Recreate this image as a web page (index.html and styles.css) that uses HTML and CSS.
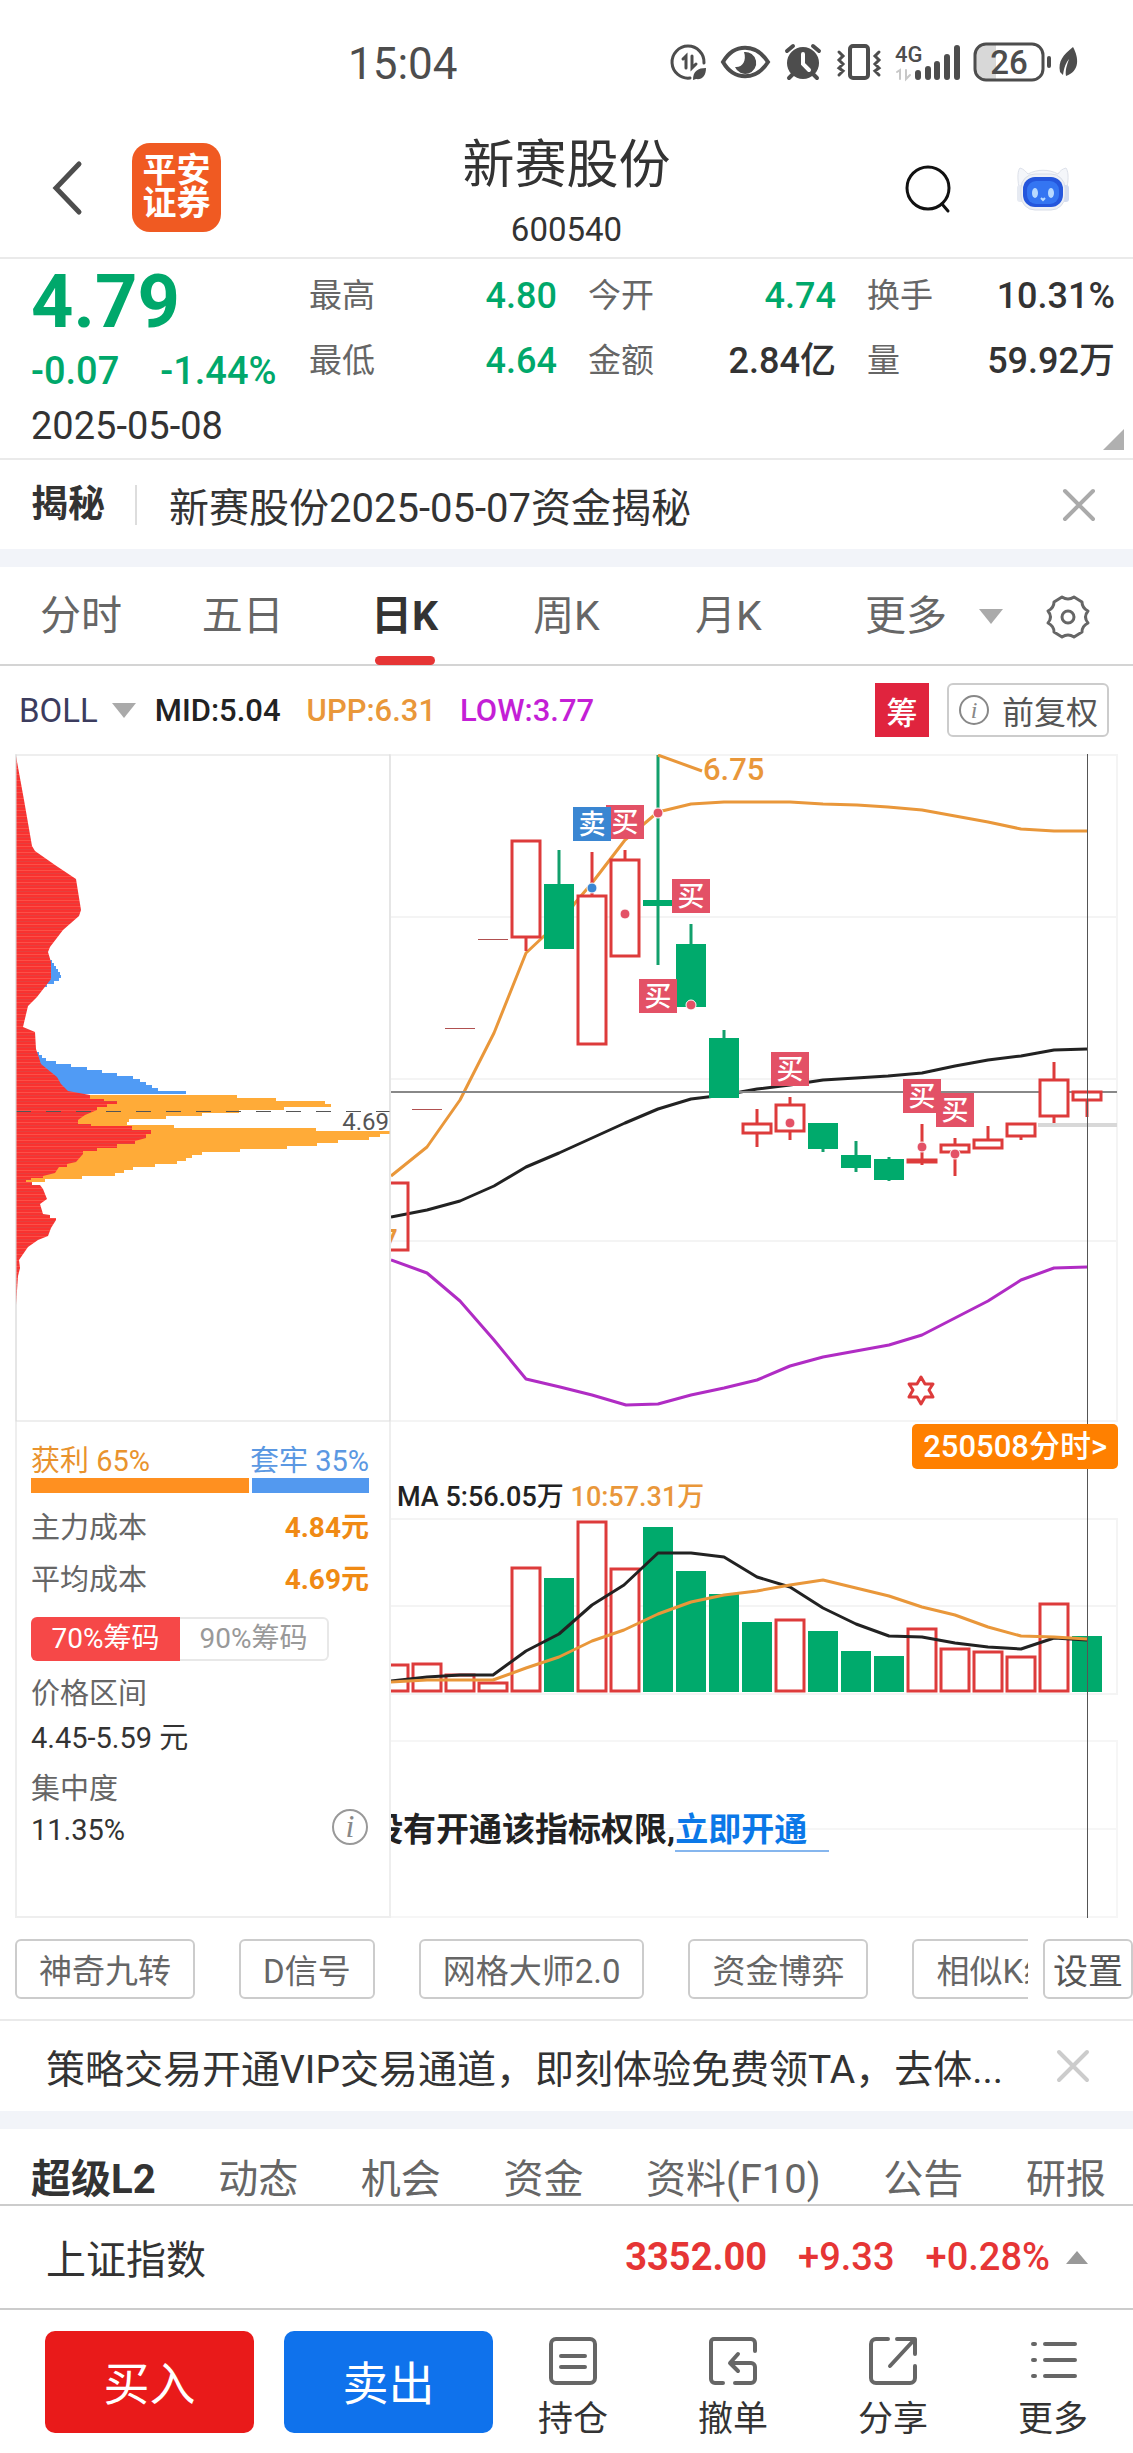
FILE: index.html
```html
<!doctype html>
<html lang="zh-CN">
	<head>
		<meta charset="utf-8">
		<meta name="viewport" content="width=device-width">
		<title>新赛股份 600540</title>
		<link rel="stylesheet" href="styles.css">
	</head>
	<body>
		<div class="status">
			<span class="clock">15:04</span>
			<svg class="status-icons" width="416" height="46" viewBox="0 0 416 46" fill="none" stroke="#4d4d4d" stroke-linecap="round">
				<!-- data saver -->
				<path d="M20 38A16 16 0 1 1 34 23" stroke-width="3"/>
				<path d="M13 19l3-3v12M22 16v12l4-4" stroke-width="3"/>
				<path d="M23 40c0-9 5-12 13-12 0 8-4 12-10 11z" fill="#4d4d4d" stroke="none"/>
				<!-- eye -->
				<path d="M53 22C64 3 86 3 98 22 86 41 64 41 53 22z" stroke-width="4"/>
				<path d="M74 12a11 11 0 1 1-9 15c7 1 12-6 9-15z" fill="#4d4d4d" stroke="none"/>
				<!-- alarm -->
				<circle cx="133" cy="23" r="16" fill="#4d4d4d" stroke="none"/>
				<path d="M117 11l6-5M149 11l-6-5M123 34l-4 4M143 34l4 4" stroke-width="4"/>
				<path d="M133 14v10l6 6" stroke="#fff" stroke-width="4"/>
				<!-- vibrate -->
				<rect x="180" y="6" width="18" height="32" rx="3" stroke-width="4"/>
				<path d="M169 12l4 4-4 4 4 4-4 4 4 3-4 4M209 12l-4 4 4 4-4 4 4 4-4 3 4 4" stroke-width="3"/>
				<!-- signal -->
				<text x="225" y="22" class="net">4G</text>
				<path d="M227 32l3-2v9M236 30v9l4-4" stroke="#c8c8c8" stroke-width="2"/>
				<path d="M248 33v4M258 29v8M267 24v13M277 17v20M287 8v29" stroke-width="6"/>
				<!-- battery -->
				<path d="M318 5h-6a8 8 0 0 0-8 8v18a8 8 0 0 0 8 8h14V5z" fill="#d8d8d8" stroke="none"/>
				<rect x="305" y="4" width="68" height="36" rx="11" stroke-width="3"/>
				<text x="339" y="34" class="charge">26</text>
				<path d="M379 18v8" stroke-width="4"/>
				<path d="M403 7c-10 8-15 14-13 25l3 3c1-8 3-12 6-16-2 6-4 11-3 17 14-5 13-18 7-29z" fill="#4d4d4d" stroke="none"/>
			</svg>
		</div>

		<header class="topbar">
			<div class="topbar-left">
				<button class="icon-btn" aria-label="返回">
					<svg width="34" height="58" viewBox="0 0 34 58" fill="none" stroke="#4d4d4d" stroke-width="5" stroke-linecap="round"><path d="M29 5L6 29l23 24"/></svg>
				</button>
				<a class="logo" href="#">平安<br>证券</a>
			</div>
			<div class="topbar-title">
				<h1>新赛股份</h1>
				<p>600540</p>
			</div>
			<div class="topbar-right">
				<button class="icon-btn" aria-label="搜索">
					<svg width="50" height="54" viewBox="0 0 50 54" fill="none" stroke="#111" stroke-width="3" stroke-linecap="round"><circle cx="25" cy="27" r="21"/><path d="M39 43l6 7"/></svg>
				</button>
				<button class="icon-btn" aria-label="助手">
					<svg width="56" height="46" viewBox="0 0 56 46">
						<path d="M4 22C2 12 3 5 5 3c4 1 6 4 8 6 9-5 21-5 30 0 2-3 4-5 8-6 2 3 3 9 1 19z" fill="#f4f6fa" stroke="#dde1ea"/>
						<rect x="2" y="20" width="7" height="17" rx="3" fill="#e6eaf2"/>
						<rect x="47" y="20" width="7" height="17" rx="3" fill="#d3dcf0"/>
						<rect x="6" y="9" width="44" height="36" rx="14" fill="#edf0f6" stroke="#d9dee8"/>
						<rect x="8" y="12" width="40" height="30" rx="12" fill="#2456dc"/>
						<rect x="12" y="16" width="32" height="23" rx="9" fill="#3475f2"/>
						<ellipse cx="20" cy="28" rx="3" ry="5" fill="#b8daff"/>
						<ellipse cx="36" cy="28" rx="3" ry="5" fill="#b8daff"/>
						<path d="M26 33l2 2 2-2" stroke="#b8daff" stroke-width="2" fill="none"/>
					</svg>
				</button>
			</div>
		</header>

		<section class="quote">
			<div class="price-box">
				<div class="price">4.79</div>
				<div class="change"><span>-0.07</span><span>-1.44%</span></div>
				<div class="date">2025-05-08</div>
			</div>
			<dl class="facts">
				<div><dt>最高</dt><dd class="down">4.80</dd></div>
				<div><dt>今开</dt><dd class="down">4.74</dd></div>
				<div><dt>换手</dt><dd>10.31%</dd></div>
				<div><dt>最低</dt><dd class="down">4.64</dd></div>
				<div><dt>金额</dt><dd>2.84亿</dd></div>
				<div><dt>量</dt><dd>59.92万</dd></div>
			</dl>
			<span class="corner"></span>
		</section>

		<section class="reveal">
			<b>揭秘</b>
			<a href="#">新赛股份2025-05-07资金揭秘</a>
			<button class="icon-btn" aria-label="关闭">
				<svg width="34" height="34" viewBox="0 0 34 34" stroke="#aaa" stroke-width="4" stroke-linecap="round"><path d="M3 3l28 28M31 3L3 31"/></svg>
			</button>
		</section>

		<nav class="periods">
			<a href="#">分时</a>
			<a href="#">五日</a>
			<a href="#" class="on">日K</a>
			<a href="#">周K</a>
			<a href="#">月K</a>
			<div class="periods-more">
				<a href="#">更多</a>
				<span class="tri"></span>
				<button class="icon-btn" aria-label="设置">
					<svg width="46" height="46" viewBox="0 0 46 46" fill="none" stroke="#666" stroke-width="3" stroke-linejoin="round">
						<path d="M17 3q6 4 12 0l8 5q0 6 6 9v0q-5 6 0 12v0q-6 3-6 9l-8 5q-6-4-12 0l-8-5q0-6-6-9v0q5-6 0-12v0q6-3 6-9z"/>
						<circle cx="23" cy="23" r="6"/>
					</svg>
				</button>
			</div>
		</nav>

		<div class="indicator">
			<button class="ind-name">BOLL</button>
			<span class="tri"></span>
			<span class="mid">MID:5.04</span>
			<span class="upp">UPP:6.31</span>
			<span class="low">LOW:3.77</span>
			<button class="chip-btn">筹</button>
			<button class="adjust">
				<svg width="32" height="32" viewBox="0 0 32 32"><circle cx="16" cy="16" r="14" fill="none" stroke="#888" stroke-width="2"/><text x="16" y="24" class="info-i">i</text></svg>
				前复权
			</button>
		</div>

		<main class="charts">
			<aside class="chips">
				<svg class="chip-plot" viewBox="15 754 376 668">
					<defs>
						<pattern id="rows" width="8" height="6" patternUnits="userSpaceOnUse">
							<rect width="8" height="6" fill="#f93230"/>
							<rect width="8" height="1" fill="#fb5048"/>
							<rect y="3" width="8" height="1" fill="#e4413f"/>
						</pattern>
					</defs>
					<path fill="#509bf5" d="M16 960H52v3H54v3H56v3H58v3H60v3H61v3H59v3H54v3H47v3H42v3H16z"/>
					<path fill="#509bf5" d="M16 1052H39v3H42v3H46v3H56v3H71v3H87v3H102v3H117v3H133v3H140v3H146v3H152v3H158v3H186v3H16z"/>
					<path fill="#ffab38" d="M16 1095H237v3H276v3H325v3H331v3H284v3H239v3H202v3H166v3H129v3H127v3H174v3H316v3H390v3H380v3H369v3H338v3H317v3H287v3H240v3H202v3H192v3H186v3H177v3H155v3H133v3H124v3H115v3H82v3H45v3H16z"/>
					<path fill="url(#rows)" d="M16 756L24 800 32 846 35 851 55 865 76 879 81 910 79 916 63 930 50 947 48 952 51 962 51 979 37 997 28 1006 23 1027 35 1032 36 1049 41 1064 57 1077 61 1084 68 1091 90 1095V1099H104V1101H117V1104H107V1107H97V1110L85 1115 78 1120V1124H91V1126H132V1130H151V1134H146V1138L135 1141V1144H117V1148H97V1151H83V1154L76 1162 67 1164V1167H59L55 1173 43 1176V1178H31V1180H26V1182H32V1185H40L43 1189 47 1199 40 1204 43 1214 50 1215V1218H56V1220L51 1228 48 1236 38 1240 28 1247 19 1260 20 1268 18 1276 16 1305z"/>
					<path stroke="#555" stroke-width="1" stroke-dasharray="15 15" shape-rendering="crispEdges" d="M16 1111H390"/>
					<text x="389" y="1130" class="avg">4.69</text>
					<rect x="16" y="755" width="374" height="666" fill="none" stroke="#ddd"/>
				</svg>
				<div class="chip-info">
					<div class="line ratio"><span class="gain">获利 65%</span><span class="loss">套牢 35%</span></div>
					<div class="bar"><i class="bar-gain" style="flex-grow: 65"></i><i class="bar-loss" style="flex-grow: 35"></i></div>
					<div class="line cost"><span>主力成本</span><b>4.84元</b></div>
					<div class="line cost"><span>平均成本</span><b>4.69元</b></div>
					<div class="seg"><button class="on">70%筹码</button><button>90%筹码</button></div>
					<div class="line">价格区间</div>
					<div class="line val">4.45-5.59 元</div>
					<div class="line gap">集中度</div>
					<div class="line val">
						<span>11.35%</span>
						<button class="icon-btn" aria-label="说明">
							<svg width="38" height="38" viewBox="0 0 38 38"><circle cx="19" cy="19" r="17" fill="none" stroke="#999" stroke-width="2"/><text x="19" y="29" class="info-big">i</text></svg>
						</button>
					</div>
				</div>
			</aside>

			<div class="panes">
				<svg class="kline" viewBox="391 754 742 668">
					<path class="grid" d="M391 755H1117V1421H391M391 917H1117M391 1079H1117M391 1241H1117"/>
					<path stroke="#d8d8d8" stroke-width="4" d="M1038 1125H1117"/>
					<path class="ln" stroke="#222" d="M391 1217L427 1210 460 1201 494 1186 526 1167 559 1153 592 1138 625 1123 658 1109 691 1099 724 1095 757 1089 790 1085 823 1080 856 1078 888 1076 922 1073 955 1066 988 1060 1021 1056 1054 1050 1087 1049"/>
					<path class="ln" stroke="#e9973a" d="M391 1176L427 1147 460 1100 494 1033 526 953 543 937 559 925 575 903 592 883 625 840 658 812 691 804 724 802 790 802 823 804 857 805 888 807 922 810 955 816 988 822 1021 829 1054 831 1087 831"/>
					<path class="ln" stroke="#b02cc4" d="M391 1260L427 1273 460 1301 494 1340 526 1379 560 1387 592 1395 626 1405 658 1404 691 1395 724 1388 757 1380 790 1366 823 1357 856 1351 889 1345 922 1335 955 1318 988 1301 1021 1280 1054 1268 1087 1267"/>
					<text x="398" y="1251" text-anchor="end" class="peak">3.97</text>
					<path stroke="#888" stroke-width="2" d="M391 1092H1117"/>

					<path class="dash" d="M478 939H508M445 1028H475M412 1109H442"/>
					<path class="wick-up" d="M526 938V951M592 852V895M625 850V859M757 1109V1147M790 1097V1140M922 1124V1165M955 1138V1176M988 1126V1139M1021 1137V1140M1054 1062V1123M1087 1101V1117"/>
					<path class="wick-down" d="M559 850V884M658 755V965M691 924V944M724 1030V1038M823 1149V1152M856 1141V1172M889 1157V1181"/>
					<g class="body-up">
						<rect x="380" y="1183" width="28" height="67" fill="none"/>
						<rect x="512" y="841" width="28" height="96"/>
						<rect x="578" y="896" width="28" height="148"/>
						<rect x="611" y="860" width="28" height="96"/>
						<rect x="743" y="1124" width="28" height="9"/>
						<rect x="776" y="1105" width="28" height="26"/>
						<rect x="908" y="1160" width="28" height="2"/>
						<rect x="941" y="1145" width="28" height="7"/>
						<rect x="974" y="1140" width="28" height="8"/>
						<rect x="1007" y="1124" width="28" height="12"/>
						<rect x="1040" y="1080" width="28" height="36"/>
						<rect x="1073" y="1092" width="28" height="8"/>
					</g>
					<g class="body-down">
						<rect x="544" y="884" width="30" height="65"/>
						<rect x="643" y="900" width="30" height="6"/>
						<rect x="676" y="944" width="30" height="63"/>
						<rect x="709" y="1038" width="30" height="60"/>
						<rect x="808" y="1123" width="30" height="26"/>
						<rect x="841" y="1155" width="30" height="13"/>
						<rect x="874" y="1159" width="30" height="21"/>
					</g>

					<g class="mark-buy">
						<circle cx="625" cy="914" r="5"/>
						<circle cx="658" cy="813" r="5"/>
						<circle cx="691" cy="1005" r="5"/>
						<circle cx="790" cy="1123" r="5"/>
						<circle cx="922" cy="1147" r="5"/>
						<circle cx="955" cy="1154" r="5"/>
						<rect x="606" y="805" width="38" height="34"/><text x="625" y="832">买</text>
						<rect x="672" y="879" width="38" height="34"/><text x="691" y="906">买</text>
						<rect x="639" y="979" width="38" height="34"/><text x="658" y="1006">买</text>
						<rect x="771" y="1052" width="38" height="34"/><text x="790" y="1079">买</text>
						<rect x="903" y="1079" width="38" height="34"/><text x="922" y="1106">买</text>
						<rect x="936" y="1093" width="38" height="34"/><text x="955" y="1120">买</text>
					</g>
					<g class="mark-sell">
						<circle cx="592" cy="888" r="5"/>
						<rect x="573" y="807" width="38" height="34"/><text x="592" y="834">卖</text>
					</g>

					<path class="ln" stroke="#e9973a" d="M658 755L702 771"/>
					<text x="703" y="780" class="peak">6.75</text>
					<path fill="none" stroke="#dd3b3b" stroke-width="3" stroke-linejoin="round" d="M921 1377l4 7h8l-4 6 4 7h-8l-4 7-4-7h-8l4-7-4-6h8z"/>
				</svg>

				<div class="between">
					<a class="intraday" href="#">250508分时&gt;</a>
					<p class="ma"><span>MA 5:56.05万</span> <span class="ma10">10:57.31万</span></p>
				</div>

				<svg class="volume" viewBox="391 1518 742 177">
					<path class="grid" d="M391 1519H1117V1694H391M391 1606H1117"/>
					<g class="body-up">
						<rect x="380" y="1665" width="28" height="26"/>
						<rect x="413" y="1664" width="28" height="27"/>
						<rect x="446" y="1675" width="28" height="16"/>
						<rect x="479" y="1683" width="28" height="8"/>
						<rect x="512" y="1568" width="28" height="123"/>
						<rect x="578" y="1522" width="28" height="169"/>
						<rect x="611" y="1569" width="28" height="122"/>
						<rect x="776" y="1620" width="28" height="71"/>
						<rect x="908" y="1629" width="28" height="62"/>
						<rect x="941" y="1649" width="28" height="42"/>
						<rect x="974" y="1652" width="28" height="39"/>
						<rect x="1007" y="1657" width="28" height="34"/>
						<rect x="1040" y="1604" width="28" height="87"/>
					</g>
					<g class="body-down">
						<rect x="544" y="1578" width="30" height="114"/>
						<rect x="643" y="1527" width="30" height="165"/>
						<rect x="676" y="1571" width="30" height="121"/>
						<rect x="709" y="1594" width="30" height="98"/>
						<rect x="742" y="1622" width="30" height="70"/>
						<rect x="808" y="1631" width="30" height="61"/>
						<rect x="841" y="1651" width="30" height="41"/>
						<rect x="874" y="1656" width="30" height="36"/>
						<rect x="1072" y="1636" width="30" height="56"/>
					</g>
					<path class="ln" stroke="#222" d="M391 1681L427 1677 460 1675 493 1675 526 1651 559 1634 592 1605 624 1585 658 1553 691 1553 724 1557 757 1577 790 1587 823 1608 856 1624 889 1636 922 1637 955 1643 988 1647 1021 1649 1054 1638 1087 1640"/>
					<path class="ln" stroke="#e9973a" d="M391 1682L427 1680 493 1680 526 1668 559 1657 592 1641 624 1630 658 1614 691 1602 724 1595 757 1591 790 1585 823 1580 856 1588 889 1596 922 1607 955 1615 988 1627 1021 1636 1054 1637 1087 1639"/>
				</svg>

				<div class="locked">
					<p>没有开通该指标权限,<a href="#">立即开通</a></p>
				</div>
				<span class="cursor"></span>
			</div>
		</main>

		<div class="tools">
			<div class="tool-list">
				<button>神奇九转</button>
				<button>D信号</button>
				<button>网格大师2.0</button>
				<button>资金博弈</button>
				<button>相似K线</button>
			</div>
			<button class="tool-set">设置</button>
		</div>

		<section class="notice">
			<a href="#">策略交易开通VIP交易通道，即刻体验免费领TA，去体...</a>
			<button class="icon-btn" aria-label="关闭">
				<svg width="34" height="34" viewBox="0 0 34 34" stroke="#ccc" stroke-width="4" stroke-linecap="round"><path d="M3 3l28 28M31 3L3 31"/></svg>
			</button>
		</section>

		<nav class="sections">
			<a href="#" class="on">超级L2</a>
			<a href="#">动态</a>
			<a href="#">机会</a>
			<a href="#">资金</a>
			<a href="#">资料(F10)</a>
			<a href="#">公告</a>
			<a href="#">研报</a>
		</nav>

		<div class="index-row">
			<span class="index-name">上证指数</span>
			<b>3352.00</b>
			<span>+9.33</span>
			<span>+0.28%</span>
			<i class="tri-up"></i>
		</div>

		<footer class="actions">
			<button class="buy">买入</button>
			<button class="sell">卖出</button>
			<a href="#">
				<svg viewBox="0 0 48 48"><rect x="2" y="2" width="44" height="44" rx="5"/><path d="M12 19h24M12 30h24"/></svg>
				持仓
			</a>
			<a href="#">
				<svg viewBox="0 0 48 48"><path d="M46 14V6a4 4 0 0 0-4-4H5a3 3 0 0 0-3 3v37a4 4 0 0 0 4 4h8M26 46h16a4 4 0 0 0 4-4V30a4 4 0 0 0-4-4H22M29 17l-8 9 8 8"/></svg>
				撤单
			</a>
			<a href="#">
				<svg viewBox="0 0 48 48"><path d="M19 2H7a5 5 0 0 0-5 5v34a5 5 0 0 0 5 5h34a5 5 0 0 0 5-5V29M28 2h18v15M45 3L21 29"/></svg>
				分享
			</a>
			<a href="#">
				<svg viewBox="0 0 48 48"><path d="M16 7h30M16 23h30M16 39h30M4 7h2M4 23h2M4 39h2"/></svg>
				更多
			</a>
		</footer>
	</body>
</html>
```
FILE: styles.css
```css
* {
	box-sizing: border-box;
}

body {
	margin: 0;
	background: #fff;
	color: #333;
	font-family: Roboto, "Noto Sans CJK SC", sans-serif;
	font-size: 33px;
}

h1, p, dl, dd {
	margin: 0;
	font-weight: normal;
}

a {
	color: inherit;
	text-decoration: none;
}

button {
	margin: 0;
	padding: 0;
	border: 0;
	background: none;
	color: inherit;
	font: inherit;
}

svg {
	display: block;
}

.icon-btn {
	display: block;
	flex: none;
}

.tri {
	border: 12px solid transparent;
	border-top: 15px solid #aaa;
	border-bottom: 0;
}

.down {
	color: #00a86b;
}

/* status bar */

.status {
	display: flex;
	justify-content: space-between;
	padding: 40px 47px 0 348px;
	height: 128px;
	color: #4d4d4d;
}

.clock {
	font-size: 44px;
	line-height: 48px;
}

.net {
	fill: #4d4d4d;
	stroke: none;
	font-size: 22px;
	font-weight: 500;
}

.charge {
	fill: #4d4d4d;
	stroke: none;
	font-size: 33px;
	font-weight: 500;
	text-anchor: middle;
}

/* title bar */

.topbar {
	display: grid;
	grid-template-columns: 1fr auto 1fr;
	height: 131px;
	border-bottom: 2px solid #eaeaea;
}

.topbar-left, .topbar-right {
	display: flex;
	align-items: center;
	height: 119px;
}

.topbar-left {
	padding-left: 50px;
	gap: 48px;
}

.topbar-right {
	justify-content: flex-end;
	padding-right: 62px;
	gap: 62px;
}

.logo {
	width: 89px;
	height: 89px;
	padding: 11px 0;
	border-radius: 18px;
	background: #f05a22;
	color: #fff;
	font-size: 34px;
	font-weight: 700;
	line-height: 33px;
	text-align: center;
}

.topbar-title {
	text-align: center;
}

.topbar-title h1 {
	padding-top: 6px;
	font-size: 52px;
	line-height: 64px;
}

.topbar-title p {
	line-height: 64px;
}

/* quote */

.quote {
	position: relative;
	display: grid;
	grid-template-columns: 278px 1fr;
	height: 201px;
	padding: 3px 18px 0 31px;
	border-bottom: 2px solid #eaeaea;
}

.price {
	color: #00a86b;
	font-size: 74px;
	font-weight: 700;
	line-height: 80px;
}

.change {
	display: flex;
	gap: 41px;
	color: #00a86b;
	font-size: 38px;
	font-weight: 500;
	line-height: 58px;
}

.date {
	font-size: 38px;
	line-height: 52px;
}

.facts {
	display: grid;
	grid-template-columns: repeat(3, 1fr);
	grid-auto-rows: 65px;
	column-gap: 31px;
}

.facts div {
	display: flex;
	justify-content: space-between;
	line-height: 68px;
}

.facts dt {
	color: #666;
}

.facts dd {
	font-size: 36px;
	font-weight: 500;
}

.corner {
	position: absolute;
	right: 9px;
	bottom: 8px;
	border-left: 21px solid transparent;
	border-bottom: 21px solid #b0b0b0;
}

/* news line */

.reveal {
	display: flex;
	align-items: center;
	height: 107px;
	padding: 0 37px 0 31px;
	border-bottom: 18px solid #f2f4f9;
}

.reveal b {
	padding-right: 30px;
	border-right: 2px solid #ddd;
	font-size: 37px;
	line-height: 40px;
}

.reveal a {
	flex: 1;
	padding-left: 32px;
	font-size: 40px;
}

/* period tabs */

.periods {
	display: grid;
	grid-template-columns: repeat(5, 1fr) 2fr;
	height: 99px;
	border-bottom: 2px solid #d4d4d4;
	color: #666;
	font-size: 41px;
	line-height: 99px;
	text-align: center;
}

.periods .on {
	color: #333;
	font-weight: 700;
}

.periods .on::after {
	content: "";
	display: block;
	width: 60px;
	height: 9px;
	margin: -10px auto 0;
	border-radius: 5px;
	background: #e63535;
}

.periods-more {
	display: flex;
	align-items: center;
	justify-content: flex-end;
	padding-right: 42px;
}

.periods-more .tri {
	margin: 0 42px 0 32px;
}

/* indicator line */

.indicator {
	display: flex;
	align-items: center;
	height: 88px;
	padding: 0 24px 0 19px;
	font-size: 31px;
	font-weight: 500;
}

.ind-name {
	color: #3c3c5e;
	font-size: 33px;
	font-weight: 400;
}

.indicator .tri {
	margin: 0 19px 0 14px;
}

.mid {
	color: #222;
}

.upp {
	margin-left: 26px;
	color: #e9973a;
}

.low {
	margin-left: 24px;
	color: #c41fd6;
}

.chip-btn {
	width: 54px;
	height: 54px;
	margin-left: auto;
	background: #e0243e;
	color: #fff;
}

.adjust {
	display: flex;
	align-items: center;
	gap: 12px;
	height: 54px;
	margin-left: 18px;
	padding: 0 9px;
	border: 2px solid #ccc;
	border-radius: 6px;
	color: #555;
	font-size: 32px;
	font-weight: 400;
}

.info-i, .info-big {
	fill: #888;
	font-family: "Liberation Serif", serif;
	font-style: italic;
	font-size: 24px;
	font-weight: 400;
	text-anchor: middle;
}

.info-big {
	font-size: 32px;
}

/* charts */

.charts {
	display: grid;
	grid-template-columns: 376fr 742fr;
	padding-left: 15px;
}

.chips {
	border: 2px solid #eee;
	border-top: 0;
}

.chip-plot {
	width: calc(100% + 4px);
	margin: 0 -2px;
}

.avg {
	fill: #555;
	font-size: 24px;
	text-anchor: end;
}

.chip-info {
	padding: 16px 20px 0 14px;
	color: #666;
	font-size: 29px;
}

.line {
	display: flex;
	align-items: center;
	justify-content: space-between;
	height: 44px;
}

.ratio {
	height: 40px;
}

.gain {
	color: #e9932e;
}

.loss {
	color: #5b98e2;
}

.bar {
	display: flex;
	gap: 3px;
	height: 15px;
	margin-bottom: 6px;
}

.bar-gain {
	background: #ff9020;
}

.bar-loss {
	background: #5399ef;
}

.cost {
	height: 52px;
}

.cost b {
	color: #f08a14;
	font-size: 28px;
}

.seg {
	display: grid;
	grid-template-columns: 1fr 1fr;
	width: 298px;
	height: 43px;
	margin: 14px 0 9px;
}

.seg button {
	border: 2px solid #e8e8e8;
	border-left: 0;
	border-radius: 0 6px 6px 0;
	color: #999;
	font-size: 28px;
	line-height: 40px;
}

.seg .on {
	border: 0;
	border-radius: 6px 0 0 6px;
	background: #f64848;
	color: #fff;
}

.val {
	color: #333;
	font-size: 29px;
}

.val .icon-btn {
	align-self: flex-start;
}

.gap {
	margin-top: 7px;
}

.panes {
	position: relative;
	overflow: hidden;
}

.kline, .volume {
	width: 100%;
}

.grid {
	fill: none;
	stroke: #f4f4f4;
	stroke-width: 2;
}

.ln {
	fill: none;
	stroke-width: 3;
	stroke-linejoin: round;
}

.dash {
	stroke: #b05050;
	stroke-width: 1;
	shape-rendering: crispEdges;
}

.wick-up {
	stroke: #dd3b3b;
	stroke-width: 3;
}

.wick-down {
	stroke: #12a06c;
	stroke-width: 3;
}

.body-up {
	fill: #fff;
	stroke: #dd3b3b;
	stroke-width: 3;
}

.body-down {
	fill: #00aa6c;
}

.mark-buy, .mark-sell {
	fill: #e35166;
}

.mark-sell {
	fill: #3a86d2;
}

.mark-buy circle, .mark-sell circle {
	stroke: #fff;
	stroke-width: 1;
}

.mark-buy text, .mark-sell text {
	fill: #fff;
	font-size: 27px;
	font-weight: 500;
	text-anchor: middle;
}

.peak {
	fill: #e9973a;
	font-size: 31px;
	font-weight: 500;
}

.between {
	display: flex;
	flex-direction: column;
	height: 96px;
	padding: 2px 15px 0 6px;
}

.intraday {
	position: relative;
	z-index: 1;
	align-self: flex-end;
	padding: 0 11px;
	border-radius: 5px;
	background: #ff8000;
	color: #fff;
	font-size: 31px;
	font-weight: 500;
	line-height: 45px;
}

.ma {
	margin-top: 8px;
	color: #222;
	font-size: 27px;
	font-weight: 500;
	line-height: 40px;
}

.ma10 {
	color: #e9973a;
}

.locked {
	height: 178px;
	margin: 45px 15px 0 0;
	border: 2px solid #f6f6f6;
	border-left: 0;
	background: linear-gradient(#f6f6f6, #f6f6f6) 0 50% / 100% 2px no-repeat;
	overflow: hidden;
}

.locked p {
	margin: 65px 0 0 -21px;
	color: #222;
	font-weight: 700;
	line-height: 45px;
	white-space: nowrap;
}

.locked a {
	display: inline-block;
	padding-right: 22px;
	border-bottom: 2px solid #86b6ee;
	color: #0b78e8;
	line-height: 41px;
}

.cursor {
	position: absolute;
	top: 0;
	bottom: 0;
	left: 93.8%;
	width: 1px;
	background: #555;
}

/* tool buttons */

.tools {
	display: flex;
	align-items: center;
	justify-content: space-between;
	height: 103px;
	padding-left: 15px;
	border-bottom: 2px solid #eaeaea;
	color: #666;
}

.tool-list {
	display: flex;
	flex: 1;
	gap: 44px;
	margin-right: 15px;
	overflow: hidden;
}

.tool-list button, .tool-set {
	flex: none;
	height: 60px;
	padding: 0 22px;
	border: 2px solid #ccc;
	border-radius: 6px;
	white-space: nowrap;
}

.tools .tool-set {
	padding: 0 8px;
	color: #555;
	font-size: 35px;
}

/* notice */

.notice {
	display: flex;
	align-items: center;
	justify-content: space-between;
	height: 108px;
	padding: 0 43px 0 46px;
	border-bottom: 18px solid #f2f4f9;
	font-size: 39px;
	white-space: nowrap;
}

/* section tabs */

.sections {
	display: flex;
	justify-content: space-between;
	height: 77px;
	padding: 0 27px 0 31px;
	border-bottom: 2px solid #ccc;
	color: #666;
	font-size: 40px;
	line-height: 101px;
	white-space: nowrap;
	overflow: hidden;
}

.sections .on {
	color: #333;
	font-weight: 700;
}

/* index */

.index-row {
	display: flex;
	align-items: center;
	gap: 31px;
	height: 104px;
	padding: 0 45px 0 46px;
	border-bottom: 2px solid #ccc;
	color: #e63535;
	font-size: 38px;
	font-weight: 500;
}

.index-name {
	flex: 1;
	color: #333;
	font-size: 40px;
	font-weight: 400;
}

.tri-up {
	margin-left: -15px;
	border: 11px solid transparent;
	border-top: 0;
	border-bottom: 13px solid #999;
}

/* bottom bar */

.actions {
	display: grid;
	grid-template-columns: 209fr 30fr 209fr repeat(4, 160fr);
	align-items: start;
	padding: 21px 0 0 45px;
	height: 143px;
}

.actions button {
	height: 102px;
	padding-bottom: 4px;
	border-radius: 10px;
	color: #fff;
	font-size: 46px;
}

.buy {
	background: #e91a1a;
}

.actions .sell {
	grid-column: 3;
	background: #0f72ec;
}

.actions a {
	display: flex;
	flex-direction: column;
	align-items: center;
	gap: 10px;
	padding-top: 6px;
	font-size: 35px;
	line-height: 50px;
}

.actions svg {
	width: 48px;
	height: 48px;
	fill: none;
	stroke: #666;
	stroke-width: 4;
	stroke-linecap: round;
	stroke-linejoin: round;
}
```
